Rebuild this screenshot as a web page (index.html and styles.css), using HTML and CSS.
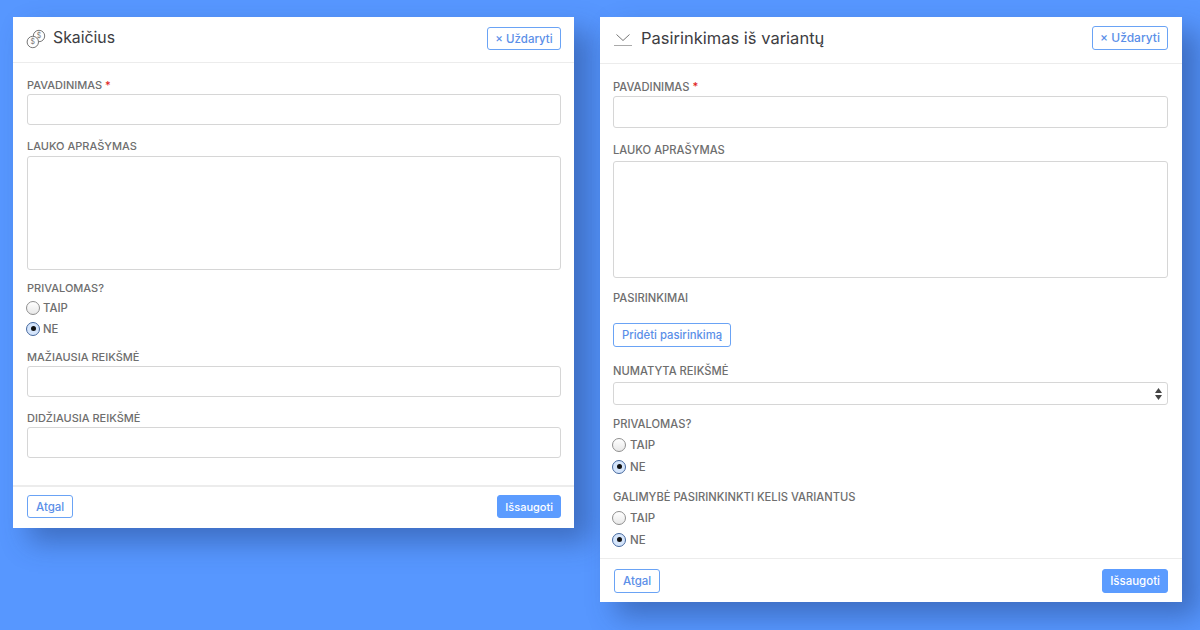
FILE: index.html
```html
<!DOCTYPE html>
<html lang="lt">
<head>
    <meta charset="UTF-8">
    <meta name="viewport" content="width=device-width, initial-scale=1.0">
    <title>Laukų nustatymai</title>
    <link rel="stylesheet" href="styles.css">
</head>
<body>
    <div class="modal modal-small">
        <div class="modal-head">
            <svg class="head-icon" width="20" height="20" viewBox="0 0 20 20" fill="none" stroke="#777" stroke-width="1">
                <circle cx="13" cy="7" r="5.7"/>
                <circle cx="6.8" cy="13" r="5.7" fill="#fff"/>
                <text x="13" y="9.4" class="coin">$</text>
                <text x="6.8" y="15.4" class="coin">$</text>
            </svg>
            <h2>Skaičius</h2>
            <button class="btn btn-close">× Uždaryti</button>
        </div>
        <div class="modal-body">
            <label class="lbl lbl-name">PAVADINIMAS <span class="req">*</span></label>
            <input class="field" type="text">
            <label class="lbl lbl-desc">LAUKO APRAŠYMAS</label>
            <textarea class="field area"></textarea>
            <label class="lbl lbl-req">PRIVALOMAS?</label>
            <div class="radio"><span class="dot"></span>TAIP</div>
            <div class="radio"><span class="dot on"></span>NE</div>
            <label class="lbl lbl-min">MAŽIAUSIA REIKŠMĖ</label>
            <input class="field" type="text">
            <label class="lbl lbl-max">DIDŽIAUSIA REIKŠMĖ</label>
            <input class="field" type="text">
        </div>
        <div class="modal-foot">
            <button class="btn">Atgal</button>
            <button class="btn btn-save">Išsaugoti</button>
        </div>
    </div>

    <div class="modal modal-big">
        <div class="modal-head">
            <svg class="head-icon" width="20" height="20" viewBox="0 0 20 20" fill="none" stroke="#777" stroke-width="1">
                <path d="M3.5 5.5 10 11.5 16.5 5.5"/>
                <path d="M1 16.5H19" stroke="#aaa"/>
            </svg>
            <h2>Pasirinkimas iš variantų</h2>
            <button class="btn btn-close">× Uždaryti</button>
        </div>
        <div class="modal-body">
            <label class="lbl">PAVADINIMAS <span class="req">*</span></label>
            <input class="field" type="text">
            <label class="lbl lbl-desc">LAUKO APRAŠYMAS</label>
            <textarea class="field area"></textarea>
            <label class="lbl lbl-opts">PASIRINKIMAI</label>
            <button class="btn btn-add">Pridėti pasirinkimą</button>
            <label class="lbl lbl-def">NUMATYTA REIKŠMĖ</label>
            <div class="field select">
                <svg width="9" height="14" viewBox="0 0 9 14" fill="#444"><path d="M4.5 1 8 6H1z"/><path d="M4.5 13 8 8H1z"/></svg>
            </div>
            <label class="lbl lbl-req">PRIVALOMAS?</label>
            <div class="radio"><span class="dot"></span>TAIP</div>
            <div class="radio"><span class="dot on"></span>NE</div>
            <label class="lbl lbl-multi">GALIMYBĖ PASIRINKINKTI KELIS VARIANTUS</label>
            <div class="radio"><span class="dot"></span>TAIP</div>
            <div class="radio"><span class="dot on"></span>NE</div>
        </div>
        <div class="modal-foot">
            <button class="btn">Atgal</button>
            <button class="btn btn-save">Išsaugoti</button>
        </div>
    </div>
</body>
</html>
```

FILE: styles.css
```css
html, body {
    height: 100%;
}
body {
    margin: 0;
    padding: 17px 18px 0 13px;
    box-sizing: border-box;
    display: flex;
    align-items: flex-start;
    gap: 26px;
    overflow: hidden;
    background: #5797ff;
    font-family: 'Inter', 'Noto Sans', sans-serif;
    color: #666;
}
.modal {
    background: #fff;
    display: flex;
    flex-direction: column;
    box-shadow: 16px 14px 26px rgba(30, 60, 120, 0.45);
}
.modal-small {
    width: 561px;
    height: 511px;
}
.modal-big {
    width: 582px;
    height: 585px;
}

/* head */
.modal-head {
    display: flex;
    align-items: center;
    box-sizing: content-box;
    height: 43px;
    padding: 0 13px 2px 13px;
    border-bottom: 1px solid #ececec;
}
.modal-big .modal-head {
    height: 43px;
    padding: 0 14px 3px 13px;
}
.head-icon {
    flex: none;
}
.coin {
    font-size: 7px;
    fill: #777;
    stroke: none;
    text-anchor: middle;
}
h2 {
    margin: 0 0 2px 7px;
    flex: 1;
    font-size: 15.8px;
    font-weight: 400;
    color: #3d3d42;
}
.modal-big h2 {
    margin-left: 8px;
    font-size: 16.5px;
}

/* buttons */
.btn {
    font-family: inherit;
    font-size: 11.5px;
    font-weight: 500;
    height: 24px;
    padding: 0 8px;
    border: 1px solid #6aa3f5;
    border-radius: 3px;
    background: #fff;
    color: #5b8fe8;
}
.modal-small .btn {
    height: 23px;
}
.btn-close {
    width: 74px;
    padding: 0;
}
.modal-big .btn-close {
    width: 76px;
    font-size: 12px;
    margin-bottom: 2px;
}
.btn-save {
    background: #5c9cff;
    border-color: #5c9cff;
    color: #fff;
    padding: 0 7px;
}
.modal-small .btn-save {
    font-size: 11px;
}

/* body */
.modal-body {
    flex: 1;
    padding: 15px 13px 0 14px;
}
.modal-big .modal-body {
    padding: 16px 14px 0 13px;
}
.lbl {
    display: block;
    font-size: 11px;
    line-height: 14px;
    font-weight: 500;
    color: #6e6e6e;
    margin-bottom: 1px;
}
.modal-big .lbl {
    font-size: 11.2px;
    margin-bottom: 2px;
}
.lbl-name {
    margin-bottom: 2px;
}
.req {
    color: #e02020;
}
.field {
    display: block;
    width: 100%;
    box-sizing: border-box;
    height: 31px;
    margin: 0;
    padding: 0;
    border: 1px solid #d6d6d6;
    border-radius: 3px;
    background: #fff;
    resize: none;
    outline: none;
}
.modal-big .field {
    height: 32px;
}
.modal-small .area {
    height: 114px;
}
.modal-big .area {
    height: 117px;
}
.modal-big .select {
    height: 23px;
    display: flex;
    align-items: center;
    justify-content: flex-end;
    padding-right: 4px;
}
.lbl-desc {
    margin-top: 14px;
    margin-bottom: 3px;
}
.modal-big .lbl-desc {
    margin-top: 15px;
    margin-bottom: 4px;
}
.lbl-req {
    margin-top: 11px;
}
.modal-big .lbl-req {
    margin-top: 12px;
}
.lbl-min {
    margin-top: 11px;
    margin-bottom: 2px;
}
.lbl-max {
    margin-top: 14px;
    margin-bottom: 2px;
}
.lbl-opts {
    margin-top: 13px;
}
.btn-add {
    display: block;
    margin-top: 18px;
    font-size: 11.3px;
}
.modal-big .lbl-def {
    margin-top: 17px;
    margin-bottom: 4px;
}
.modal-big .lbl-multi {
    margin-top: 13px;
    margin-bottom: 3px;
}

/* radios */
.radio {
    display: flex;
    align-items: center;
    height: 21px;
    font-size: 11.3px;
    font-weight: 500;
    color: #6e6e6e;
}
.lbl + .radio {
    margin-top: 2px;
}
.modal-big .radio {
    font-size: 11.5px;
    margin-top: 1px;
}
.modal-big .lbl + .radio {
    margin-top: 3px;
}
.dot {
    width: 14px;
    height: 14px;
    box-sizing: border-box;
    margin: 0 3px 0 -1px;
    border: 1px solid #8f8f8f;
    border-radius: 50%;
    background: linear-gradient(#fff, #e8e8e8);
    display: flex;
    align-items: center;
    justify-content: center;
}
.modal-big .dot {
    margin-right: 4px;
}
.dot.on {
    border-color: #46689e;
    background: #d5e5fb;
}
.dot.on::after {
    content: "";
    width: 5px;
    height: 5px;
    border-radius: 50%;
    background: #111;
}

/* foot */
.modal-foot {
    display: flex;
    align-items: center;
    justify-content: space-between;
    box-sizing: border-box;
    height: 43px;
    padding: 0 13px 2px 14px;
    border-top: 2px solid #ececec;
}
.modal-big .modal-foot {
    height: 44px;
    padding: 0 14px 0 14px;
    border-top-width: 1px;
}
```
